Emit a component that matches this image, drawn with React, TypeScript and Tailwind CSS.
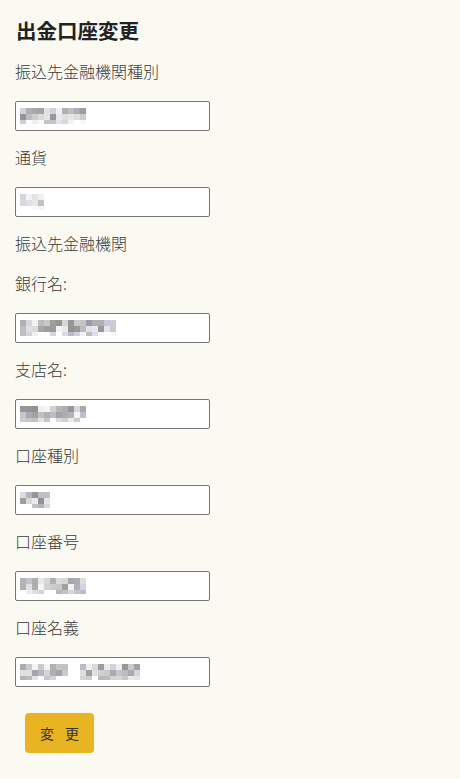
import React from "react";

// 入力欄の中身はモザイク表示
function Mosaic({ width, seed, gapAt }: { width: number; seed: number; gapAt?: [number, number] }) {
    const cols = Math.floor(width / 6);
    const rows = 3;
    let s = seed;
    const rand = () => {
        s = (s * 9301 + 49297) % 233280;
        return s / 233280;
    };
    const cells: React.ReactNode[] = [];
    for (let r = 0; r < rows; r++) {
        for (let c = 0; c < cols; c++) {
            const blank = gapAt && c >= gapAt[0] && c < gapAt[1];
            const v = rand();
            const g = blank ? 255 : Math.round(145 + v * 100);
            const tint = rand() > 0.8 ? 14 : 0;
            const edge = r === 2 ? 30 : 0;
            const x = Math.min(255, g + edge);
            cells.push(
                <div
                    key={`${r}-${c}`}
                    className={r === 2 ? "w-[6px] h-[4px]" : "w-[6px] h-[6px]"}
                    style={{ background: `rgb(${x}, ${x}, ${Math.min(255, x + tint)})` }}
                />
            );
        }
    }
    return (
        <div className="grid blur-[0.7px]" style={{ gridTemplateColumns: `repeat(${cols}, 6px)` }}>
            {cells}
        </div>
    );
}

function Field({ width, seed, gapAt }: { width: number; seed: number; gapAt?: [number, number] }) {
    return (
        <div className="w-[195px] h-[30px] bg-white border border-[#767676] rounded-[2px] flex items-center pl-[4px] mb-4">
            <Mosaic width={width} seed={seed} gapAt={gapAt} />
        </div>
    );
}

function Label({ children }: { children: React.ReactNode }) {
    return <p className="text-[16px] leading-[20px] font-light text-[#3a3a3a] mb-5">{children}</p>;
}

export default function App() {
    return (
        <div
            className="min-h-[779px] w-full bg-[#fbfaf2] px-[15px] pt-[16px]"
            style={{ fontFamily: '"Noto Sans CJK JP", "Noto Sans", sans-serif' }}
        >
            <h1 className="text-[20.5px] leading-[28px] font-bold text-[#222] ml-[1px] mb-[17px]">出金口座変更</h1>

            <Label>振込先金融機関種別</Label>
            <Field width={66} seed={11} />

            <Label>通貨</Label>
            <Field width={24} seed={37} />

            <Label>振込先金融機関</Label>
            <Label>銀行名:</Label>
            <Field width={96} seed={53} />

            <Label>支店名:</Label>
            <Field width={66} seed={71} />

            <Label>口座種別</Label>
            <Field width={30} seed={89} />

            <Label>口座番号</Label>
            <Field width={66} seed={103} />

            <Label>口座名義</Label>
            <Field width={120} seed={127} gapAt={[8, 10]} />

            <button className="mt-[10px] ml-[10px] w-[69px] h-[40px] rounded-[4px] bg-[#e9b422] text-[14px] text-[#333] tracking-[4px] pl-[4px]">
                変 更
            </button>
        </div>
    );
}
